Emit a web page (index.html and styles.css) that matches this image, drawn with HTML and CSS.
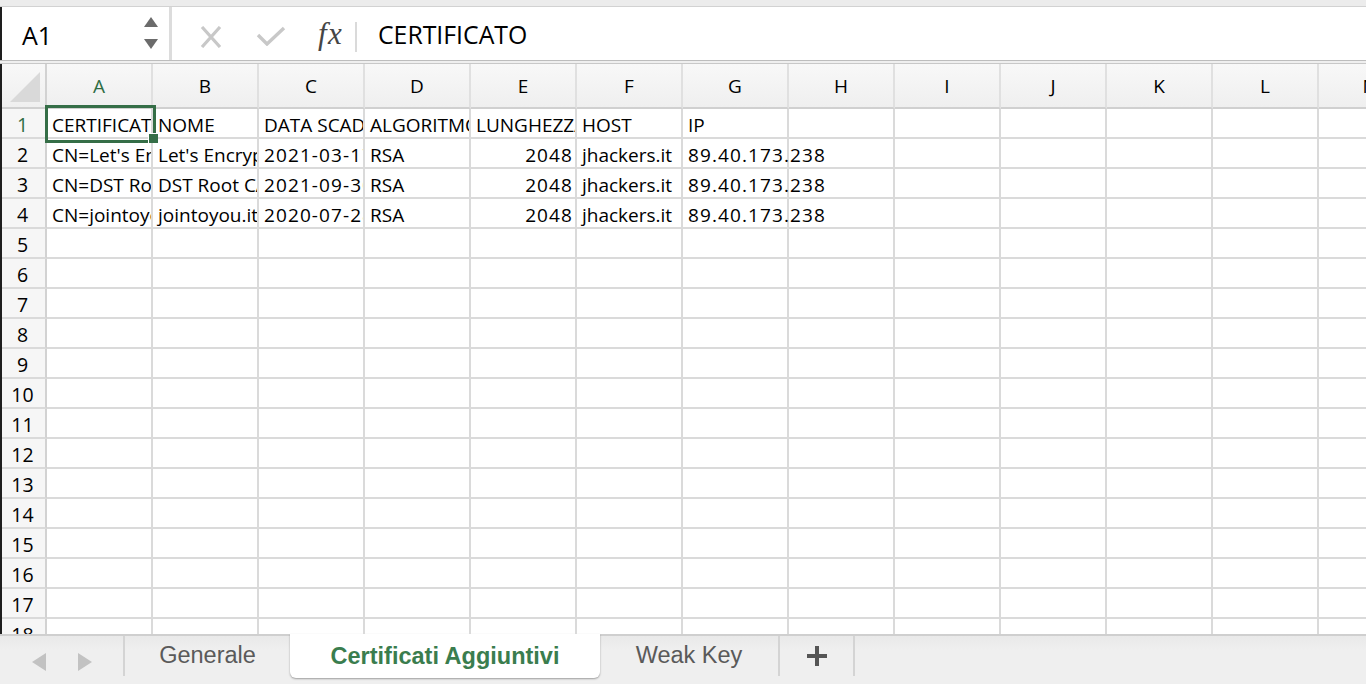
FILE: index.html
```html
<!DOCTYPE html>
<html lang="it">
<head>
<meta charset="utf-8">
<title>Certificati Aggiuntivi</title>
<link rel="stylesheet" href="styles.css">
</head>
<body>
<div class="app">
  <div class="topstrip"></div>
  <div class="formulabar">
    <div class="namebox">
      <span class="nb-text">A1</span>
      <svg class="spin" width="16" height="34" viewBox="0 0 16 34"><polygon points="8,0 15,10 1,10" fill="#6b6b6b"/><polygon points="1,22 15,22 8,32" fill="#6b6b6b"/></svg>
    </div>
    <div class="fxtools">
      <svg class="ico-x" width="24" height="22" viewBox="0 0 24 22"><path d="M3 1 L21 21 M21 1 L3 21" stroke="#c8c8c8" stroke-width="3.2" fill="none"/></svg>
      <svg class="ico-check" width="30" height="20" viewBox="0 0 30 20"><path d="M2 9 L11 18 L28 2" stroke="#c8c8c8" stroke-width="3.4" fill="none"/></svg>
      <span class="fx">fx</span>
      <span class="fx-sep"></span>
    </div>
    <div class="formula">CERTIFICATO</div>
  </div>
  <div class="barsep"></div>
  <div class="main">
    <div class="edge"></div>
    <div class="grid">
      <div class="row hdr">
        <div class="rh corner"><svg width="32" height="32" viewBox="0 0 32 32"><polygon points="31,1 31,31 1,31" fill="#d9d9d9"/></svg></div>
        <div class="ch sel">A</div><div class="ch">B</div><div class="ch">C</div><div class="ch">D</div><div class="ch">E</div><div class="ch">F</div><div class="ch">G</div><div class="ch">H</div><div class="ch">I</div><div class="ch">J</div><div class="ch">K</div><div class="ch">L</div><div class="ch">M</div>
      </div>
      <div class="row">
        <div class="rh sel">1</div>
        <div class="c">CERTIFICATO</div><div class="c">NOME</div><div class="c">DATA SCADENZA</div><div class="c">ALGORITMO</div><div class="c">LUNGHEZZA</div><div class="c">HOST</div><div class="c">IP</div><div class="c"></div><div class="c"></div><div class="c"></div><div class="c"></div><div class="c"></div><div class="c"></div>
      </div>
      <div class="row">
        <div class="rh">2</div>
        <div class="c">CN=Let's Encrypt Authority X3</div><div class="c">Let's Encrypt Authority X3</div><div class="c digits">2021-03-17</div><div class="c">RSA</div><div class="c num digits">2048</div><div class="c">jhackers.it</div><div class="c over digits">89.40.173.238</div><div class="c"></div><div class="c"></div><div class="c"></div><div class="c"></div><div class="c"></div><div class="c"></div>
      </div>
      <div class="row">
        <div class="rh">3</div>
        <div class="c">CN=DST Root CA X3</div><div class="c">DST Root CA X3</div><div class="c digits">2021-09-30</div><div class="c">RSA</div><div class="c num digits">2048</div><div class="c">jhackers.it</div><div class="c over digits">89.40.173.238</div><div class="c"></div><div class="c"></div><div class="c"></div><div class="c"></div><div class="c"></div><div class="c"></div>
      </div>
      <div class="row">
        <div class="rh">4</div>
        <div class="c">CN=jointoyou.it</div><div class="c">jointoyou.it</div><div class="c digits">2020-07-28</div><div class="c">RSA</div><div class="c num digits">2048</div><div class="c">jhackers.it</div><div class="c over digits">89.40.173.238</div><div class="c"></div><div class="c"></div><div class="c"></div><div class="c"></div><div class="c"></div><div class="c"></div>
      </div>
      <div class="row"><div class="rh">5</div><div class="c"></div><div class="c"></div><div class="c"></div><div class="c"></div><div class="c"></div><div class="c"></div><div class="c"></div><div class="c"></div><div class="c"></div><div class="c"></div><div class="c"></div><div class="c"></div><div class="c"></div></div>
      <div class="row"><div class="rh">6</div><div class="c"></div><div class="c"></div><div class="c"></div><div class="c"></div><div class="c"></div><div class="c"></div><div class="c"></div><div class="c"></div><div class="c"></div><div class="c"></div><div class="c"></div><div class="c"></div><div class="c"></div></div>
      <div class="row"><div class="rh">7</div><div class="c"></div><div class="c"></div><div class="c"></div><div class="c"></div><div class="c"></div><div class="c"></div><div class="c"></div><div class="c"></div><div class="c"></div><div class="c"></div><div class="c"></div><div class="c"></div><div class="c"></div></div>
      <div class="row"><div class="rh">8</div><div class="c"></div><div class="c"></div><div class="c"></div><div class="c"></div><div class="c"></div><div class="c"></div><div class="c"></div><div class="c"></div><div class="c"></div><div class="c"></div><div class="c"></div><div class="c"></div><div class="c"></div></div>
      <div class="row"><div class="rh">9</div><div class="c"></div><div class="c"></div><div class="c"></div><div class="c"></div><div class="c"></div><div class="c"></div><div class="c"></div><div class="c"></div><div class="c"></div><div class="c"></div><div class="c"></div><div class="c"></div><div class="c"></div></div>
      <div class="row"><div class="rh">10</div><div class="c"></div><div class="c"></div><div class="c"></div><div class="c"></div><div class="c"></div><div class="c"></div><div class="c"></div><div class="c"></div><div class="c"></div><div class="c"></div><div class="c"></div><div class="c"></div><div class="c"></div></div>
      <div class="row"><div class="rh">11</div><div class="c"></div><div class="c"></div><div class="c"></div><div class="c"></div><div class="c"></div><div class="c"></div><div class="c"></div><div class="c"></div><div class="c"></div><div class="c"></div><div class="c"></div><div class="c"></div><div class="c"></div></div>
      <div class="row"><div class="rh">12</div><div class="c"></div><div class="c"></div><div class="c"></div><div class="c"></div><div class="c"></div><div class="c"></div><div class="c"></div><div class="c"></div><div class="c"></div><div class="c"></div><div class="c"></div><div class="c"></div><div class="c"></div></div>
      <div class="row"><div class="rh">13</div><div class="c"></div><div class="c"></div><div class="c"></div><div class="c"></div><div class="c"></div><div class="c"></div><div class="c"></div><div class="c"></div><div class="c"></div><div class="c"></div><div class="c"></div><div class="c"></div><div class="c"></div></div>
      <div class="row"><div class="rh">14</div><div class="c"></div><div class="c"></div><div class="c"></div><div class="c"></div><div class="c"></div><div class="c"></div><div class="c"></div><div class="c"></div><div class="c"></div><div class="c"></div><div class="c"></div><div class="c"></div><div class="c"></div></div>
      <div class="row"><div class="rh">15</div><div class="c"></div><div class="c"></div><div class="c"></div><div class="c"></div><div class="c"></div><div class="c"></div><div class="c"></div><div class="c"></div><div class="c"></div><div class="c"></div><div class="c"></div><div class="c"></div><div class="c"></div></div>
      <div class="row"><div class="rh">16</div><div class="c"></div><div class="c"></div><div class="c"></div><div class="c"></div><div class="c"></div><div class="c"></div><div class="c"></div><div class="c"></div><div class="c"></div><div class="c"></div><div class="c"></div><div class="c"></div><div class="c"></div></div>
      <div class="row"><div class="rh">17</div><div class="c"></div><div class="c"></div><div class="c"></div><div class="c"></div><div class="c"></div><div class="c"></div><div class="c"></div><div class="c"></div><div class="c"></div><div class="c"></div><div class="c"></div><div class="c"></div><div class="c"></div></div>
      <div class="row"><div class="rh">18</div><div class="c"></div><div class="c"></div><div class="c"></div><div class="c"></div><div class="c"></div><div class="c"></div><div class="c"></div><div class="c"></div><div class="c"></div><div class="c"></div><div class="c"></div><div class="c"></div><div class="c"></div></div>
      <div class="selbox"><span class="handle"></span></div>
    </div>
  </div>
  <div class="tabbar">
    <div class="nav">
      <svg width="16" height="20" viewBox="0 0 16 20"><polygon points="15,1 15,19 1,10" fill="#c2c2c2"/></svg>
      <svg width="16" height="20" viewBox="0 0 16 20"><polygon points="1,1 1,19 15,10" fill="#c2c2c2"/></svg>
    </div>
    <div class="tab t-gen">Generale</div>
    <div class="tab active t-cert">Certificati Aggiuntivi</div>
    <div class="tab t-weak">Weak Key</div>
    <div class="tab t-add"><svg width="22" height="22" viewBox="0 0 22 22"><path d="M11 1 V21 M1 11 H21" stroke="#555" stroke-width="4" fill="none"/></svg></div>
  </div>
</div>
</body>
</html>
```

FILE: styles.css
```css
* { box-sizing: border-box; }
html, body { margin: 0; padding: 0; }
body {
  width: 1366px;
  height: 684px;
  overflow: hidden;
  background: #fff;
  font-family: "Open Sans", "Liberation Sans", sans-serif;
  color: #000;
}
.app { display: flex; flex-direction: column; height: 684px; }

.topstrip { height: 7px; background: #ececec; border-bottom: 1px solid #d2d2d2; }

.formulabar {
  height: 53px;
  display: flex;
  align-items: stretch;
  background: #fff;
  border-left: 2px solid #1e1e1e;
}
.namebox {
  width: 170px;
  flex: none;
  display: flex;
  align-items: center;
  justify-content: space-between;
  padding: 0 10px 0 20px;
  border-right: 3px solid #dcdcdc;
}
.nb-text { font-size: 25px; line-height: 1; padding-top: 4px; }
.spin { display: block; margin-top: 1px; }

.fxtools {
  width: 193px;
  flex: none;
  display: flex;
  align-items: center;
  padding-left: 27px;
}
.ico-x { display: block; margin-top: 6px; }
.ico-check { display: block; margin-left: 33px; margin-top: 4px; }
.fx {
  font-family: "Liberation Serif", "DejaVu Serif", serif;
  font-style: italic;
  font-size: 31px;
  color: #454545;
  margin-left: 32px;
  line-height: 1;
  letter-spacing: 1.5px;
}
.fx-sep {
  width: 2px;
  height: 30px;
  background: #dadada;
  margin-left: 12px;
  margin-top: 6px;
}
.formula {
  flex: 1;
  display: flex;
  align-items: center;
  padding-left: 13px;
  padding-top: 1px;
  font-size: 24.8px;
}

.barsep {
  height: 4px;
  background: #efefef;
  border-top: 1px solid #bdbdbd;
  border-bottom: 1px solid #c8c8c8;
}

.main { display: flex; height: 570px; }
.edge { width: 2px; flex: none; background: #1e1e1e; }
.grid { position: relative; flex: 1; overflow: hidden; }

.row { display: flex; height: 30px; }
.row.hdr { height: 45px; }

.rh {
  width: 45px;
  flex: none;
  background: #f6f6f6;
  border-right: 2px solid #d2d2d2;
  border-bottom: 2px solid #dadada;
  display: flex;
  align-items: center;
  justify-content: center;
  font-size: 19.5px;
  padding: 3px 2px 0 0;
}
.rh.sel { color: #2f6d44; }
.rh.corner {
  background: linear-gradient(#f8f8f8, #efefef);
  align-items: flex-end;
  justify-content: flex-end;
  padding: 0 4px 4px 0;
  border-bottom: 2px solid #d0d0d0;
}
.rh.corner svg { display: block; }

.ch {
  width: 106px;
  flex: none;
  background: linear-gradient(#f8f8f8, #efefef);
  border-right: 2px solid #e0e0e0;
  border-bottom: 2px solid #d0d0d0;
  display: flex;
  align-items: center;
  justify-content: center;
  font-size: 19px;
  padding-top: 1px;
}
.ch.sel { color: #2f6d44; }

.c {
  width: 106px;
  flex: none;
  border-right: 2px solid #dadada;
  border-bottom: 2px solid #dadada;
  font-size: 19px;
  line-height: 26px;
  padding: 3px 4px 0 5px;
  white-space: nowrap;
  overflow: hidden;
}
.c.digits { letter-spacing: 1.1px; }
.c.num { text-align: right; padding-right: 2px; }
.c.over { overflow: visible; position: relative; z-index: 1; }

.selbox {
  position: absolute;
  left: 43px;
  top: 41px;
  width: 111px;
  height: 38px;
  border: 3px solid #356e47;
  pointer-events: none;
  z-index: 2;
}
.handle {
  position: absolute;
  right: -5px;
  bottom: -3px;
  width: 10px;
  height: 10px;
  background: #356e47;
  border-left: 1px solid #fff;
  border-top: 1px solid #fff;
}

.tabbar {
  height: 50px;
  flex: none;
  display: flex;
  align-items: stretch;
  background: linear-gradient(#e9e9e9, #efefef 30%, #efefef);
  border-top: 2px solid #cfcfcf;
  font-family: "Liberation Sans", Arial, sans-serif;
}
.nav {
  width: 123px;
  flex: none;
  display: flex;
  align-items: center;
  padding-left: 31px;
  gap: 30px;
  padding-top: 3px;
}
.nav svg { display: block; }
.tab {
  flex: none;
  display: flex;
  align-items: center;
  justify-content: center;
  font-size: 23.5px;
  color: #5a5a5a;
  border-left: 2px solid #d4d4d4;
  margin: 0 0 8px 0;
  padding-bottom: 2px;
}
.t-gen { width: 167px; }
.t-cert { width: 310px; }
.t-weak { width: 178px; border-left: none; }
.t-add { width: 77px; border-right: 2px solid #d4d4d4; }
.t-add svg { display: block; margin-top: 2px; }
.tab.active {
  background: #fff;
  color: #3a7d4e;
  font-weight: bold;
  border-left: none;
  margin-top: -2px;
  margin-bottom: 6px;
  border-radius: 0 0 6px 6px;
  box-shadow: 0 1px 2px rgba(0,0,0,0.35);
  padding-top: 2px;
}
```
